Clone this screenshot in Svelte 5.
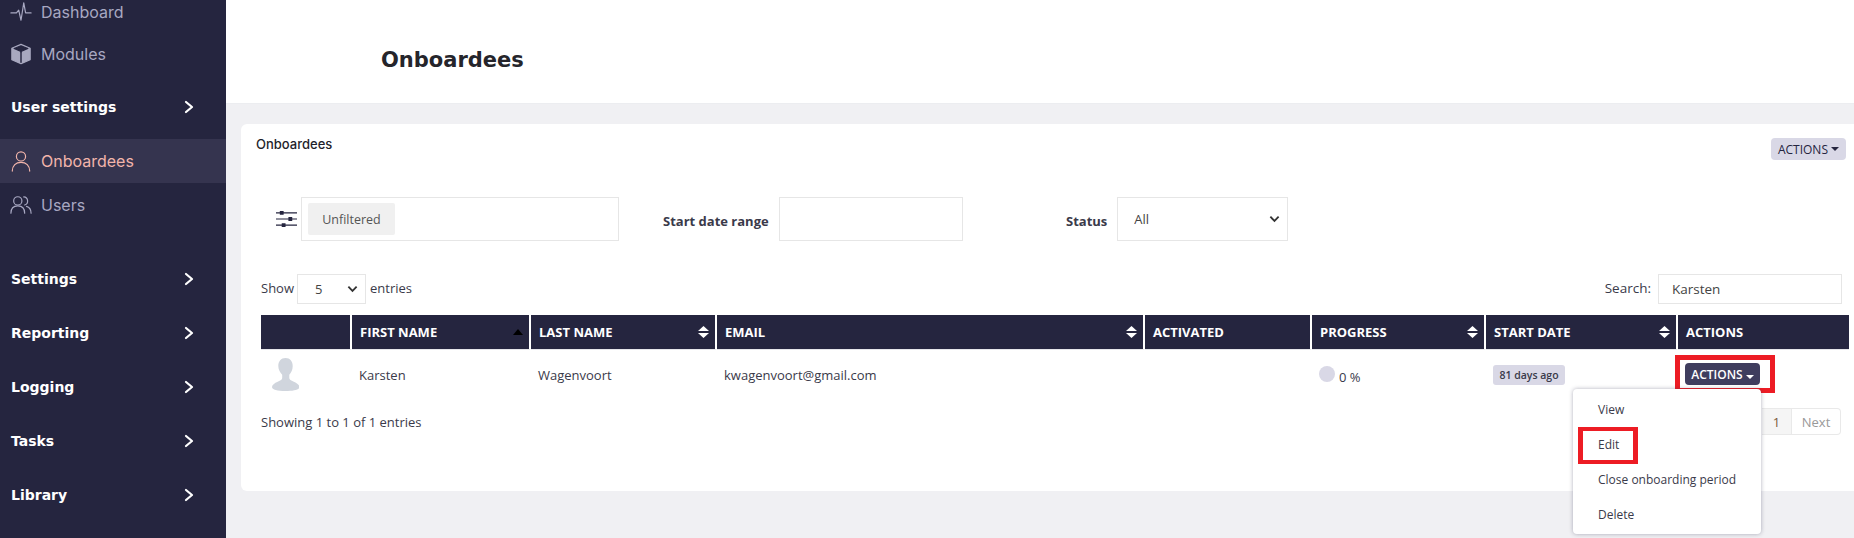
<script lang="ts">
	const topLinks = [
		{ label: 'Dashboard', icon: 'pulse' },
		{ label: 'Modules', icon: 'box' }
	];
	const userLinks = [
		{ label: 'Onboardees', icon: 'user', active: true },
		{ label: 'Users', icon: 'users', active: false }
	];
	const sections = ['Settings', 'Reporting', 'Logging', 'Tasks', 'Library'];
	const columns = [
		{ label: '', width: 91, sort: '' },
		{ label: 'First name', width: 179, sort: 'asc' },
		{ label: 'Last name', width: 186, sort: 'both' },
		{ label: 'Email', width: 428, sort: 'both' },
		{ label: 'Activated', width: 167, sort: '' },
		{ label: 'Progress', width: 174, sort: 'both' },
		{ label: 'Start date', width: 192, sort: 'both' },
		{ label: 'Actions', width: 171, sort: '' }
	];
	const menu = ['View', 'Edit', 'Close onboarding period', 'Delete'];
</script>

{#snippet navIcon(name)}
	<svg class="nav-icon" viewBox="0 0 24 24" fill="none" stroke="currentColor" stroke-width="1.3" stroke-linecap="round" stroke-linejoin="round">
		{#if name === 'pulse'}
			<path d="M1 13h6l2.5-3 2.5 11 3-19 2 11h6" />
		{:else if name === 'box'}
			<path d="M12 1.500l10 4.200v12.600l-10 4.200-10-4.200V5.700z" fill="#a8a8bf" stroke="#a8a8bf" />
			<path d="M4.500 6l7.500 3.200L19.500 6 12 3z" fill="#25253f" stroke="#25253f" />
			<path d="M12 10v11" stroke="#25253f" stroke-width="1.600" />
		{:else if name === 'user'}
			<circle cx="12" cy="7" r="5" />
			<path d="M2.500 23c0-6 4-9.500 9.500-9.500s9.500 3.500 9.500 9.500" />
		{:else}
			<circle cx="8.500" cy="7.500" r="4.500" />
			<path d="M1 21c0-5 3-8 7.500-8s7.500 3 7.500 8" />
			<path d="M15 3.200a4.500 4.500 0 0 1 1 8.800M18 13.500c3 .8 5 3.500 5 7.500" />
		{/if}
	</svg>
{/snippet}

{#snippet chevron()}
	<svg class="chevron" viewBox="0 0 10 14" fill="none" stroke="currentColor" stroke-width="2.200" stroke-linecap="round" stroke-linejoin="round">
		<path d="M2 2l6 5-6 5" />
	</svg>
{/snippet}

<div class="page">
	<aside class="sidebar">
		<nav class="top-links">
			{#each topLinks as link}
				<a class="link" href="#top">
					{@render navIcon(link.icon)}
					<span>{link.label}</span>
				</a>
			{/each}
		</nav>
		<div class="section first">User settings {@render chevron()}</div>
		<nav class="user-links">
			{#each userLinks as link}
				<a class="link" class:active={link.active} href="#top">
					{@render navIcon(link.icon)}
					<span>{link.label}</span>
				</a>
			{/each}
		</nav>
		<div class="sections">
			{#each sections as section}
				<div class="section">{section} {@render chevron()}</div>
			{/each}
		</div>
	</aside>

	<main class="main">
		<header class="header">
			<h1>Onboardees</h1>
		</header>

		<div class="content">
			<section class="card">
				<div class="card-head">
					<h2>Onboardees</h2>
					<button class="btn-light">ACTIONS <i class="caret"></i></button>
				</div>

				<div class="filters">
					<svg class="sliders" viewBox="0 0 22 18" fill="none" stroke="#25253f" stroke-width="1.300">
						<path d="M0 2.500h22M0 9h22M0 15.500h22" />
						<path d="M4 .5h4v4H4zM13 7h4v4h-4zM6 13.500h4v4H6z" fill="#25253f" stroke="none" />
					</svg>
					<div class="filter-box"><span class="chip">Unfiltered</span></div>
					<label class="filter-label date-label" for="date-range">Start date range</label>
					<input id="date-range" class="field date-field" type="text" />
					<label class="filter-label status-label" for="status">Status</label>
					<select id="status" class="field status-field">
						<option>All</option>
					</select>
				</div>

				<div class="table-tools">
					<div class="length">
						Show
						<select class="field length-field"><option>5</option></select>
						entries
					</div>
					<div class="search">
						<label for="search">Search:</label>
						<input id="search" class="field search-field" type="text" value="Karsten" />
					</div>
				</div>

				<table>
					<colgroup>
						{#each columns as col}
							<col style="width: {col.width}px" />
						{/each}
					</colgroup>
					<thead>
						<tr>
							{#each columns as col}
								<th>
									{col.label}
									{#if col.sort === 'asc'}
										<svg class="sort asc" viewBox="0 0 10 6"><path d="M5 0l5 6H0z" fill="#000" /></svg>
									{:else if col.sort === 'both'}
										<svg class="sort" viewBox="0 0 11 12"><path d="M5.500 0L11 5H0zM5.500 12L0 7h11z" fill="#fff" /></svg>
									{/if}
								</th>
							{/each}
						</tr>
					</thead>
					<tbody>
						<tr>
							<td class="avatar-cell">
								<svg class="avatar" viewBox="0 0 27 33">
									<path d="M13.500 0c4.500 0 7.200 3.300 7.200 8 0 3.700-1.500 6.800-3.400 8.800v3.200c0 1.500 1.500 2.500 4.500 3.800 3.200 1.400 5.700 3.200 5.700 5.200 0 2.600-6 4-14 4s-13.500-1.400-13.500-4c0-2 2.500-3.800 5.700-5.200 3-1.300 4.500-2.300 4.500-3.800v-3.200C8.300 14.800 6.300 11.700 6.300 8c0-4.700 2.700-8 7.200-8z" fill="#d0d5dd" />
								</svg>
							</td>
							<td>Karsten</td>
							<td>Wagenvoort</td>
							<td>kwagenvoort@gmail.com</td>
							<td></td>
							<td><span class="progress"><i class="dot"></i><span>0 %</span></span></td>
							<td><span class="badge">81 days ago</span></td>
							<td class="actions-cell">
								<span class="highlight">
									<button class="btn-dark">ACTIONS <i class="caret down"></i></button>
								</span>
								<ul class="dropdown">
									{#each menu as item}
										<li class:marked={item === 'Edit'}>{item}</li>
									{/each}
								</ul>
							</td>
						</tr>
					</tbody>
				</table>

				<div class="table-foot">
					<div class="info">Showing 1 to 1 of 1 entries</div>
					<div class="pagination">
						<span class="page-num">1</span>
						<span class="page-next">Next</span>
					</div>
				</div>
			</section>
		</div>
	</main>
</div>

<style>
	:global(body) { margin: 0; background: #f0f0f3; }
	.page { display: flex; width: 1854px; height: 538px; overflow: hidden; font-family: "Open Sans", sans-serif; font-size: 13px; color: #3a3a4a; }

	.sidebar { flex: none; width: 226px; height: 538px; background: #25253f; color: #a8a8c2; overflow: hidden; }
	.top-links { margin-top: -9px; }
	.link { display: flex; align-items: center; gap: 9px; height: 42px; padding-left: 10px; color: inherit; text-decoration: none; font-family: Inter, sans-serif; font-size: 16px; }
	.nav-icon { flex: none; width: 22px; height: 22px; }
	.user-links { margin-top: 5px; }
	.user-links .link { height: 44px; }
	.link.active { background: #35344f; color: #f2b5ab; }
	.section { display: flex; align-items: center; justify-content: space-between; width: 183px; height: 54px; padding-left: 11px; color: #fff; font-family: "DejaVu Sans", sans-serif; font-weight: 700; font-size: 14px; }
	.section.first { margin-top: 5px; height: 54px; }
	.sections { margin-top: 25px; }
	.chevron { width: 10px; height: 14px; color: #fff; }

	.main { flex: 1; min-width: 0; }
	.header { height: 104px; box-sizing: border-box; background: #fff; border-bottom: 1px solid #ecedf0; display: flex; align-items: center; padding: 16px 0 0 155px; }
	h1 { margin: 0; font-family: "DejaVu Sans", sans-serif; font-weight: 700; font-size: 21px; color: #25252b; }

	.content { padding: 20px 0 0 15px; }
	.card { position: relative; height: 367px; box-sizing: border-box; background: #fff; border-radius: 6px 0 0 6px; padding: 13px 4px 0 20px; }
	.card-head { display: flex; justify-content: space-between; align-items: flex-start; margin-left: -5px; padding-right: 4px; }
	h2 { margin: 0; font-family: Inter, sans-serif; font-weight: 500; font-size: 13px; line-height: 14px; color: #1f1f2b; }
	.btn-light { margin-top: 1px; height: 22px; width: 75px; padding: 0; border: 0; border-radius: 4px; background: #d9d8e6; color: #25253f; font: 12px "Open Sans", sans-serif; }
	.caret { display: inline-block; vertical-align: 3px; border-left: 4px solid transparent; border-right: 4px solid transparent; border-top: 4px solid #25253f; }
	.caret.down { border-top-color: #fff; vertical-align: 0; }

	.filters { display: flex; align-items: center; margin: 37px 0 0 15px; height: 44px; }
	.sliders { flex: none; width: 21px; height: 18px; margin-right: 4px; }
	.filter-box { width: 318px; height: 44px; box-sizing: border-box; border: 1px solid #e6e6e6; padding: 5px 6px; }
	.chip { display: flex; align-items: center; justify-content: center; width: 87px; height: 32px; border-radius: 2px; background: #f0f0f0; color: #555; font-size: 12.500px; }
	.filter-label { font-weight: 700; font-size: 13px; color: #3a3a4a; }
	.date-label { margin: 3px 10px 0 44px; width: 106px; white-space: nowrap; }
	.status-label { margin: 3px 10px 0 103px; white-space: nowrap; }
	.field { box-sizing: border-box; border: 1px solid #e6e6e6; background: #fff; font: 13px "Open Sans", sans-serif; color: #444; border-radius: 0; outline: none; }
	.date-field { width: 184px; height: 44px; }
	select.field { appearance: none; background-image: url("data:image/svg+xml,%3Csvg xmlns='http://www.w3.org/2000/svg' viewBox='0 0 12 8'%3E%3Cpath d='M1.500 1.500L6 6l4.500-4.500' fill='none' stroke='%23333' stroke-width='2'/%3E%3C/svg%3E"); background-repeat: no-repeat; background-size: 11px 8px; background-position: right 7px center; }
	.status-field { width: 171px; height: 44px; padding-left: 16px; }

	.table-tools { display: flex; justify-content: space-between; align-items: center; margin-top: 33px; height: 30px; padding-right: 8px; }
	.length, .search { display: flex; align-items: center; gap: 4px; font-size: 13px; }
	.length, .search label { margin-top: -3px; }
	.length-field { width: 69px; height: 30px; padding-left: 17px; margin: 3px 0 0 -1px; }
	.search { gap: 7px; }
	.search label { font-size: 13.500px; }
	.search-field { width: 184px; height: 30px; padding-left: 13px; font-size: 13.500px; }

	table { table-layout: fixed; width: 1588px; margin-top: 11px; border-collapse: separate; border-spacing: 0; }
	th { position: relative; height: 35px; box-sizing: border-box; padding: 0 0 0 8px; background: #25253f; border-right: 2px solid #fff; border-bottom: 1px solid #e6e6ea; color: #fff; font-size: 13px; font-weight: 700; text-align: left; text-transform: uppercase; white-space: nowrap; }
	th:last-child { border-right: 0; }
	.sort { position: absolute; right: 6px; top: 11px; width: 11px; height: 12px; }
	.sort.asc { top: 14px; width: 10px; height: 6px; }
	td { height: 50px; padding: 0 0 0 7px; font-size: 13px; color: #3a3a4a; white-space: nowrap; vertical-align: middle; }
	.avatar-cell { padding-left: 11px; }
	.avatar { display: block; width: 27px; height: 33px; margin-top: -1px; }
	.progress { display: inline-flex; align-items: center; gap: 4px; }
	.dot { width: 16px; height: 16px; border-radius: 50%; background: #d9d8e6; margin-top: -3px; }
	.progress span { margin-top: 3px; }
	.badge { display: inline-block; width: 72px; height: 20px; line-height: 20px; text-align: center; border-radius: 3px; background: #d9d8e6; font-size: 10.500px; font-weight: 600; color: #3a3a4a; }

	.actions-cell { position: relative; padding: 0; vertical-align: top; }
	.highlight { display: inline-block; margin: 5px 0 0 -3px; padding: 3px 10px 3px 5px; border: 5px solid #ed1c24; font-size: 0; }
	.btn-dark { width: 75px; height: 22px; padding: 0; border: 0; border-radius: 4px; background: #3f3d5e; color: #fff; font: 600 12px "Open Sans", sans-serif; }
	.dropdown { position: absolute; z-index: 2; top: 39px; left: -105px; width: 188px; height: 145px; box-sizing: border-box; margin: 0; padding: 3px 0 0; list-style: none; background: #fff; border-radius: 4px; box-shadow: 0 0 4px rgba(60, 60, 90, 0.4); }
	.dropdown li { position: relative; height: 35px; line-height: 35px; padding-left: 25px; font-size: 12px; color: #3a3a4a; }
	.marked::after { content: ""; position: absolute; left: 5px; top: 0; width: 50px; height: 29px; border: 4px solid #ed1c24; border-left-width: 5px; border-right-width: 5px; }

	.table-foot { display: flex; justify-content: space-between; align-items: center; margin-top: 8px; padding-right: 9px; height: 27px; }
	.info { font-size: 13px; }
	.pagination { display: flex; height: 27px; box-sizing: border-box; border: 1px solid #e9e9e9; border-radius: 0 4px 4px 0; border-left: 0; font-size: 13px; }
	.pagination span { display: flex; align-items: center; justify-content: center; }
	.page-num { width: 29px; background: #f5f5f5; border-right: 1px solid #e9e9e9; color: #7a5a3a; }
	.page-next { width: 48px; color: #999; }
</style>
